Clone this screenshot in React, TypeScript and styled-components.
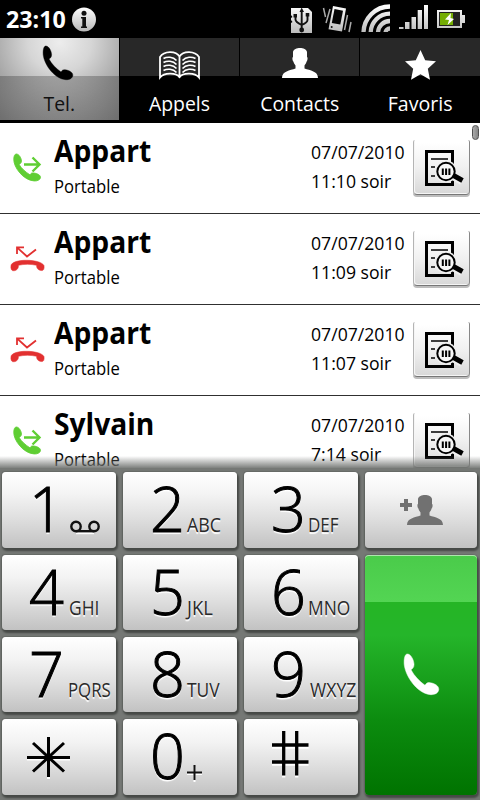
import React from "react";
import styled, { createGlobalStyle, css } from "styled-components";

const GlobalStyle = createGlobalStyle`
  * { box-sizing: border-box; }
  body { margin: 0; background: #000; font-family: "Open Sans", "Noto Sans", sans-serif; }
  button { font-family: inherit; }
  svg { display: block; flex: none; overflow: visible; }
`;

const Phone = styled.div`
  width: 480px;
  height: 800px;
  overflow: hidden;
  background: #000;
  display: flex;
  flex-direction: column;
`;

/* Text drawn with slightly condensed letterforms. */
const Text = styled.span<{ $size: number; $line: number; $scale?: number; $weight?: number; $origin?: string; $color?: string }>`
  display: inline-block;
  white-space: nowrap;
  font-size: ${(p) => p.$size}px;
  line-height: ${(p) => p.$line}px;
  font-weight: ${(p) => p.$weight ?? 400};
  color: ${(p) => p.$color ?? "#000"};
  transform: scaleX(${(p) => p.$scale ?? 1});
  transform-origin: ${(p) => p.$origin ?? "left"} center;
`;

const StatusBar = styled.header`
  height: 38px;
  flex: none;
  display: flex;
  align-items: center;
  padding-left: 6px;
`;
const Clock = styled.div`
  width: 66px;
  height: 36px;
`;
const StatusIcons = styled.div`
  margin-left: auto;
  display: flex;
`;

const Tabs = styled.nav`
  height: 85px;
  flex: none;
  display: grid;
  grid-template-columns: 119px 119px 119px 120px;
  column-gap: 1px;
  padding-bottom: 3px;
`;
const Tab = styled.div<{ $active?: boolean }>`
  display: flex;
  flex-direction: column;
  align-items: center;
  ${(p) =>
    p.$active
      ? css`
          background: linear-gradient(rgba(0, 0, 0, 0) 38px, rgba(0, 0, 0, 0.24) 38px, rgba(0, 0, 0, 0.12) 100%),
            radial-gradient(ellipse 90px 85px at 50% 5%, #ededed, #d6d6d6 35%, #a6a6a6 75%, #808080 110%);
        `
      : css`
          background: linear-gradient(#282828 38px, #000 38px);
        `}
`;
const TabIcon = styled.div`
  height: 52px;
  display: flex;
  justify-content: center;
`;

const CallList = styled.main`
  height: 349px;
  flex: none;
  overflow: hidden;
  background: #fff;
  display: flex;
`;
const Rows = styled.div`
  width: 480px;
  flex: none;
`;
const Row = styled.div`
  height: 91px;
  display: grid;
  grid-template-columns: 54px 257px 102px 57px;
  border-bottom: 1px solid #303030;
`;
const CallIcon = styled.div`
  padding: 26px 0 0 8px;
`;
const Column = styled.div<{ $top: number; $gap: number }>`
  padding-top: ${(p) => p.$top}px;
  display: flex;
  flex-direction: column;
  align-items: flex-start;
  gap: ${(p) => p.$gap}px;
`;
const DetailButton = styled.button`
  margin: 17px 0 0;
  padding: 9px 0 1px 11px;
  display: flex;
  align-items: flex-start;
  width: 57px;
  height: 55px;
  border: 1px solid #b4b4b4;
  border-top: 0;
  border-right-color: #888;
  border-bottom-color: #777;
  border-radius: 2px 2px 4px 4px;
  background: linear-gradient(#fff 5%, #f1f1f1 50%, #d8d8d8);
  box-shadow: inset 1px -1px 0 #f5f5f5, 0 2px 0 #bdbdbd;
`;
const ScrollThumb = styled.div`
  width: 7px;
  height: 15px;
  margin: 2px 0 0 -8px;
  flex: none;
  border: 1px solid #505050;
  border-radius: 4px;
  background: linear-gradient(90deg, #aaa, #858585);
`;

const Fade = styled.div`
  height: 12px;
  margin-top: -16px;
  flex: none;
  position: relative;
  background: linear-gradient(rgba(118, 120, 117, 0), rgba(112, 115, 112, 0.9));
`;
const Keypad = styled.section`
  height: 332px;
  flex: none;
  position: relative;
  padding: 4px 3px 5px 2px;
  display: grid;
  grid-template-columns: 114px 114px 114px 112px;
  grid-template-rows: 76px 75px 75px 76px;
  gap: 7px;
  background: #757875;
`;
const keyFace = css`
  border: 0;
  padding: 0;
  border-radius: 4px;
  box-shadow: inset 0 1px 0 rgba(255, 255, 255, 0.55), 1px 2px 2px 1px #464946, -1px -1px 1px #6a6d6a;
`;
const Key = styled.button`
  ${keyFace}
  background: linear-gradient(#fff, #f3f3f3 30%, #dedede 62%, #c2c2c2);
  display: grid;
  grid-template-columns: 38px 1fr;
  padding-left: 26px;
  text-align: left;
  text-shadow: 0 2px 1px #fff;
`;
const Digit = styled.div`
  height: 75px;
  display: flex;
  padding-left: 1px;
  -webkit-text-stroke: 1px #000;
`;
const Letters = styled.div<{ $shift?: number }>`
  height: 75px;
  padding: 38px 0 0 ${(p) => p.$shift ?? 0}px;
`;
const SymbolKey = styled(Key)<{ $left: number; $top: number }>`
  display: flex;
  padding: ${(p) => p.$top}px 0 0 ${(p) => p.$left}px;
`;
const CallButton = styled.button`
  ${keyFace}
  grid-column: 4;
  grid-row: 2 / span 3;
  display: flex;
  padding: 99px 0 0 39px;
  background: linear-gradient(#4acb4a, #53d553 47px, #25b525 47px, #25b52a 80px, #0c8c0f 165px, #007300);
`;

const HANDSET =
  "M3 0C6 .2 8.5 5 8.6 8.8c0 2.7-1.7 3.6-2.6 4.3C8.8 18.3 13.3 22.6 18 26c1.4-2 2-2.6 4.3-2.2 4.1.5 7.7 2.7 7.5 5.6-.3 3-3.6 4.5-7 4.3C10.8 33-.4 16.5.1 6.3.2 2.6 1.1-.1 3 0Z";

const Handset = ({ width, height, color }: { width: number; height: number; color: string }) => (
  <svg width={width} height={height} viewBox="0 0 30 34" preserveAspectRatio="none">
    <path d={HANDSET} fill={color} stroke={color} strokeWidth=".4" />
  </svg>
);

const BookIcon = () => (
  <svg width="41" height="28" viewBox="0 0 41 28" fill="none" stroke="#fff" strokeWidth="1.8">
    <path d="M1 26.500V6C5-.5 17-.5 20.500 5.500C24-.5 36-.5 40 6V26.500C36 21.500 24 21.500 20.500 26C17 21.500 5 21.500 1 26.500ZM20.500 5V27" />
    {[7.5, 11.5, 15.5, 19.5].map((y) => (
      <path key={y} strokeWidth="1.6" d={`M4.500 ${y}C8 ${y - 2} 14 ${y - 2} 17.500 ${y + 2}M23.500 ${y + 2}C27 ${y - 2} 33 ${y - 2} 36.500 ${y}`} />
    ))}
  </svg>
);

const PERSON =
  "M11 4C12-1.200 24-1.200 25 4v5c1 0 .6 4-.4 4.500C24 16 23 16.500 22.500 17.500v3C28 22.500 36 23 36 30H0C0 23 8 22.500 13.500 20.500v-3C13 16.500 12 16 11.400 13.500C10.400 13 10 9 11 9Z";

const PersonIcon = ({ color }: { color: string }) => (
  <svg width="36" height="30" viewBox="0 0 36 30" fill={color}>
    <path d={PERSON} />
  </svg>
);

const StarIcon = () => (
  <svg width="31" height="30" viewBox="0 0 31 30" fill="#fff">
    <path d="M15.500 0l4.700 10.300L31 11.200l-8.200 7.600L25 29.700l-9.500-5.500L6 29.700l2.200-10.900L0 11.200l10.800-.9Z" />
  </svg>
);

const OutgoingIcon = () => (
  <svg width="40" height="40" viewBox="0 0 40 40">
    <g transform="translate(5.700 5) scale(.9 .8)">
      <path d={HANDSET} fill="#5fce33" stroke="#5fce33" strokeWidth="1" />
    </g>
    <path d="M16 15.500H31M24.500 8.500L31.500 15.500L24.500 22.500" fill="none" stroke="#5fce33" strokeWidth="2.400" />
  </svg>
);

const MissedIcon = () => (
  <svg width="40" height="40" viewBox="0 0 40 40">
    <path d="M3 25.500C4 18.500 32 18.500 36 25.500C36.500 29 35.500 31 33 30.500C30 30 28.500 28.500 28.500 25.300C23 24 16 24 10.500 25.300C10.500 28.500 9 30.500 6 30.800C3.500 31 2.500 29 3 25.500Z" fill="#e23030" stroke="#e23030" strokeWidth=".5" />
    <path d="M9 14V7.300H16M9.500 7.800L19 16.500L28 9.500" fill="none" stroke="#e23030" strokeWidth="1.800" />
  </svg>
);

const DetailIcon = () => (
  <svg width="39" height="38" viewBox="0 0 39 38">
    <path d="M1.500 2.500H27.500V35.500H1.500Z" fill="none" stroke="#000" strokeWidth="3" />
    <path d="M6 10H23M6 18H10M6 27H10" stroke="#000" strokeWidth="1.700" />
    <path d="M26 26L37 32" stroke="#f0f0f0" strokeWidth="8" />
    <circle cx="21" cy="22.500" r="11" fill="#f0f0f0" />
    <circle cx="21" cy="22.500" r="8.700" fill="#f7f7f7" stroke="#000" strokeWidth="2" />
    <path d="M28.500 26.500L37.500 31.500" stroke="#000" strokeWidth="5" />
    <path d="M17.800 19.500V26M21.100 19.500V26M24.400 19.500V26" stroke="#000" strokeWidth="2" />
  </svg>
);

const InfoIcon = () => (
  <svg width="24" height="25" viewBox="0 0 24 25">
    <defs>
      <linearGradient id="silver" x1="0" y1="0" x2="0" y2="1">
        <stop offset="0" stopColor="#fff" />
        <stop offset="1" stopColor="#b8b8b8" />
      </linearGradient>
    </defs>
    <circle cx="12" cy="12.500" r="12" fill="url(#silver)" />
    <circle cx="12" cy="6.300" r="2.500" fill="#111" />
    <path d="M9 10H14V19.500H15V21H9V19.500H10.300V11.500H9Z" fill="#111" />
  </svg>
);

/* USB, vibrate, wifi, signal and battery indicators. */
const SystemIcons = () => (
  <svg width="190" height="38" viewBox="290 0 190 38">
    <defs>
      <linearGradient id="metal" gradientUnits="userSpaceOnUse" x1="0" y1="5" x2="0" y2="33">
        <stop offset="0" stopColor="#fff" />
        <stop offset="1" stopColor="#bbb" />
      </linearGradient>
      <clipPath id="wifi">
        <path d="M360 4H390V32H360Z" />
      </clipPath>
    </defs>
    <path d="M291 8H308L312 12V33H291V23L292.500 22L291 20V18L292.500 17L291 15Z" fill="url(#metal)" />
    <g fill="none" stroke="#111" strokeWidth="1.900">
      <path d="M301.700 11V30M295.500 16V19.500Q295.500 22 301.700 25M307.500 15V20Q307.500 22.500 301.700 25" />
    </g>
    <path d="M301.700 7.500L304 12H299.500ZM293.500 14H297V17.500H293.500ZM305.700 13H309.300V16.500H305.700Z" fill="#111" />
    <circle cx="301.700" cy="30" r="2.400" fill="#111" />
    <path d="M333 6L346 8.500L342 31.500L328.500 29.300Z" fill="url(#metal)" />
    <path d="M334.500 9L343 10.700L340.300 24.500L331.800 23Z" fill="#050505" />
    <circle cx="331.700" cy="27" r="1" fill="#111" />
    <path d="M323.500 8L325.500 17M330 9L326 23M347.500 15L344.500 30M351 22L349 32" stroke="#aaa" strokeWidth="1.500" />
    <g clipPath="url(#wifi)" fill="none" stroke="url(#metal)" strokeWidth="4.300">
      <circle cx="390" cy="33" r="26.500" />
      <circle cx="390" cy="33" r="19.300" />
      <circle cx="390" cy="33" r="12" />
      <circle cx="390" cy="33" r="4.500" />
    </g>
    <path d="M399 27H403.500V29H399ZM405 22H409.500V29H405ZM411.500 17H416V29H411.500ZM417.700 10H422V29H417.700ZM424 5H428V29H424Z" fill="url(#metal)" />
    <path d="M437 10H462V15H465V23H462V28H437Z" fill="url(#metal)" />
    <path d="M439 12H460V26H439Z" fill="#222" />
    <path d="M440 13H453V25H440Z" fill="#74ad04" />
    <path d="M451 13L445 19.500L449 20L447.500 25L454 19L450.500 18Z" fill="#fff" />
  </svg>
);

const VoicemailIcon = () => (
  <svg width="30" height="13" viewBox="0 0 30 13" fill="none" strokeWidth="2.400">
    <path d="M6 13H24" stroke="#fff" />
    <g stroke="#111">
      <circle cx="6" cy="6.500" r="4.700" />
      <circle cx="24" cy="6.500" r="4.700" />
      <path d="M6 11.200H24" />
    </g>
  </svg>
);

const AddContactIcon = () => (
  <svg width="44" height="31" viewBox="0 0 44 31" fill="#717171">
    <path d="M4 5H8V9H12V13H8V17H4V13H0V9H4Z" />
    <path d={PERSON} transform="translate(7 1)" />
  </svg>
);

const StarSymbol = () => (
  <svg width="44" height="42" viewBox="0 0 44 42" strokeWidth="3">
    <path d="M0 22H43M21.500 2V42" stroke="#fff" />
    <path d="M0 20.500H43M21.500 0V40M6 6L37 34.500M37 6L6 34.500" stroke="#000" />
  </svg>
);
const HashSymbol = () => (
  <svg width="37" height="47" viewBox="0 0 37 47" strokeWidth="3.300">
    <path d="M0 16H36.500M0 33H36.500M11.700 2V46.500M24.700 2V46.500" stroke="#fff" />
    <path d="M0 14H36.500M0 31H36.500M11.700 0V44.500M24.700 0V44.500" stroke="#000" />
  </svg>
);
const PlusSymbol = () => (
  <svg width="17" height="28" viewBox="0 0 17 28" strokeWidth="2">
    <path d="M0 17H15M7.500 10V25" stroke="#fff" />
    <path d="M0 15.500H15M7.500 8V23" stroke="#111" />
  </svg>
);

interface Call {
  name: string;
  time: string;
  missed?: boolean;
}
const calls: Call[] = [
  { name: "Appart", time: "11:10 soir" },
  { name: "Appart", time: "11:09 soir", missed: true },
  { name: "Appart", time: "11:07 soir", missed: true },
  { name: "Sylvain", time: "7:14 soir" },
];

const tabs = [
  { label: "Tel.", scale: 0.97, top: 8, icon: <TabHandset /> },
  { label: "Appels", scale: 0.97, top: 13, icon: <BookIcon /> },
  { label: "Contacts", scale: 0.97, top: 10, icon: <PersonIcon color="#fff" /> },
  { label: "Favoris", scale: 0.98, top: 12, icon: <StarIcon /> },
];
function TabHandset() {
  return (
    <HandsetOffset>
      <Handset width={30} height={34} color="#000" />
    </HandsetOffset>
  );
}
const HandsetOffset = styled.div`
  margin-right: 3px;
`;
const TabGlyph = styled.div<{ $top: number }>`
  padding-top: ${(p) => p.$top}px;
`;

interface KeySpec {
  digit: string;
  letters?: string;
  scale?: number;
  shift?: number;
}
const keys: KeySpec[] = [
  { digit: "1" },
  { digit: "2", letters: "ABC", scale: 0.89 },
  { digit: "3", letters: "DEF", scale: 0.85 },
  { digit: "4", letters: "GHI", scale: 0.87, shift: 2.5 },
  { digit: "5", letters: "JKL", scale: 0.92 },
  { digit: "6", letters: "MNO", scale: 0.87 },
  { digit: "7", letters: "PQRS", scale: 0.84, shift: 1.5 },
  { digit: "8", letters: "TUV", scale: 0.87 },
  { digit: "9", letters: "WXYZ", scale: 0.88, shift: 1.5 },
];

const IconInset = styled.div`
  padding: 10px 0 0 4px;
`;
const DigitKey = ({ digit, letters, scale, shift }: KeySpec) => (
  <Key>
    <Digit>
      <Text $size={63} $line={71} $weight={300} $scale={0.97}>{digit}</Text>
    </Digit>
    <Letters $shift={shift}>
      {letters ? (
        <Text $size={20} $line={30} $scale={scale} $color="#2a2a2a">{letters}</Text>
      ) : digit === "0" ? (
        <PlusSymbol />
      ) : (
        <IconInset>
          <VoicemailIcon />
        </IconInset>
      )}
    </Letters>
  </Key>
);

export default function App() {
  return (
    <Phone>
      <GlobalStyle />
      <StatusBar>
        <Clock>
          <Text $size={23} $line={37} $weight={700} $scale={1.01} $color="#fff">23:10</Text>
        </Clock>
        <InfoIcon />
        <StatusIcons>
          <SystemIcons />
        </StatusIcons>
      </StatusBar>
      <Tabs>
        {tabs.map((tab, i) => (
          <Tab key={tab.label} $active={i === 0}>
            <TabIcon>
              <TabGlyph $top={tab.top}>{tab.icon}</TabGlyph>
            </TabIcon>
            <Text $size={20} $line={27} $scale={tab.scale} $origin="center" $color={i === 0 ? "#111" : "#fff"}>
              {tab.label}
            </Text>
          </Tab>
        ))}
      </Tabs>
      <CallList>
        <Rows>
          {calls.map((call, i) => (
            <Row key={i}>
              <CallIcon>{call.missed ? <MissedIcon /> : <OutgoingIcon />}</CallIcon>
              <Column $top={10} $gap={5}>
                <Text $size={30} $line={36} $weight={700} $scale={0.94}>{call.name}</Text>
                <Text $size={18} $line={24} $scale={0.925}>Portable</Text>
              </Column>
              <Column $top={17} $gap={5}>
                <Text $size={18} $line={24} $scale={0.98}>07/07/2010</Text>
                <Text $size={18} $line={24} $scale={0.98}>{call.time}</Text>
              </Column>
              <DetailButton>
                <DetailIcon />
              </DetailButton>
            </Row>
          ))}
        </Rows>
        <ScrollThumb />
      </CallList>
      <Fade />
      <Keypad>
        {keys.slice(0, 3).map((k) => (
          <DigitKey key={k.digit} {...k} />
        ))}
        <SymbolKey $left={35} $top={22}>
          <AddContactIcon />
        </SymbolKey>
        {keys.slice(3).map((k) => (
          <DigitKey key={k.digit} {...k} />
        ))}
        <SymbolKey $left={25} $top={18}>
          <StarSymbol />
        </SymbolKey>
        <DigitKey digit="0" />
        <SymbolKey $left={28} $top={12}>
          <HashSymbol />
        </SymbolKey>
        <CallButton>
          <Handset width={35} height={41} color="#fff" />
        </CallButton>
      </Keypad>
    </Phone>
  );
}
